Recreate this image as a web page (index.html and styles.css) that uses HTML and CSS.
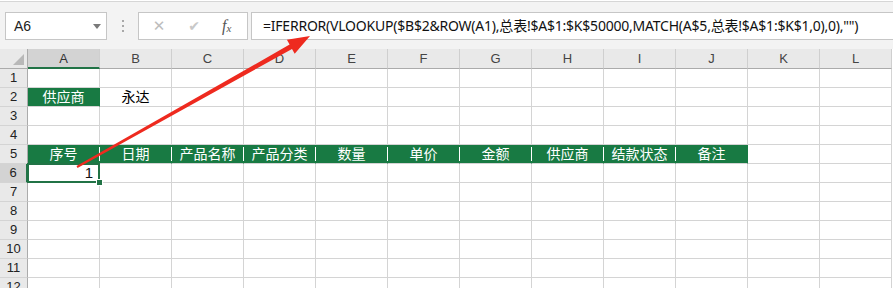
FILE: index.html
```html
<html>
	<head>
		<title>总表 - 公式</title>
	<link rel="stylesheet" href="styles.css">
	</head>
	<body>
		<div class="app">
			<div class="topbar">
				<div class="namebox">
					<span>A6</span>
					<span class="drop"></span>
				</div>
				<div class="grip"><i></i><i></i><i></i></div>
				<div class="fxbox">
					<span class="btn cancel">&#x2715;</span>
					<span class="btn ok">&#x2714;</span>
					<span class="fx">f<sub>x</sub></span>
				</div>
				<div class="formula">=IFERROR(VLOOKUP($B$2&amp;ROW(A1),总表!$A$1:$K$50000,MATCH(A$5,总表!$A$1:$K$1,0),0),"")</div>
			</div>
			<div class="sheet" id="sheet"></div>
		</div>
		<svg class="arrow" width="893" height="288" viewBox="0 0 893 288">
			<polygon fill="#ee2a1f" points="76.5,166.1 289.6,44.6 286.9,39.8 310,36 294.7,53.8 292,49 77.5,167.9"/>
		</svg>
		<script>
			var cols = ["A","B","C","D","E","F","G","H","I","J","K","L"];
			var kopf = ["序号","日期","产品名称","产品分类","数量","单价","金额","供应商","结款状态","备注"];
			var sheet = document.getElementById("sheet");
			var html = '<div class="corner"></div>';

			for (var c = 0; c < cols.length; c++){
				html += '<div class="colhead' + (c == 0 ? ' sel' : '') + '">' + cols[c] + '</div>';
			}

			for (var r = 1; r <= 12; r++){
				html += '<div class="rowhead' + (r == 6 ? ' sel' : '') + '">' + r + '</div>';
				for (var c = 0; c < cols.length; c++){
					var cls = "cell", txt = "";
					if (r == 2 && c == 0){ cls += " green"; txt = "供应商"; }
					if (r == 2 && c == 1){ txt = "永达"; }
					if (r == 5 && c < kopf.length){
						cls += " green head" + (c < kopf.length - 1 ? " split" : "");
						txt = kopf[c];
					}
					if (r == 6 && c == 0){ cls += " active"; txt = "1"; }
					html += '<div class="' + cls + '">' + txt + '</div>';
				}
			}
			sheet.innerHTML = html;
		</script>
	</body>
</html>
```

FILE: styles.css
```css
body {
	margin: 0;
	width: 893px;
	height: 288px;
	overflow: hidden;
	background-color: #ffffff;
	font-family: "Noto Sans", "Noto Sans CJK SC", sans-serif;
}

.app {
	padding-top: 1px;
}

.topbar {
	display: flex;
	align-items: flex-start;
	height: 48px;
	padding-top: 10px;
	box-sizing: border-box;
	background-color: #f3f3f3;
	border-top: 1px solid #d6d6d6;
}

.namebox {
	display: flex;
	align-items: center;
	justify-content: space-between;
	margin-left: 5px;
	width: 102px;
	height: 28px;
	box-sizing: border-box;
	padding: 0 5px 0 8px;
	background-color: white;
	border: 1px solid #c6c6c6;
	font-family: "Liberation Sans", sans-serif;
	font-size: 14px;
	color: #222;
}

.drop {
	width: 0;
	height: 0;
	border-left: 4px solid transparent;
	border-right: 4px solid transparent;
	border-top: 5px solid #7a7a7a;
}

.grip {
	width: 31px;
	height: 28px;
	display: flex;
	flex-direction: column;
	align-items: center;
	justify-content: center;
	gap: 3px;
}

.grip i {
	display: block;
	width: 2px;
	height: 2px;
	background-color: #a8a8a8;
}

.fxbox {
	display: flex;
	align-items: center;
	width: 110px;
	height: 28px;
	box-sizing: border-box;
	background-color: white;
	border: 1px solid #c6c6c6;
}

.btn {
	width: 24px;
	margin-left: 8px;
	text-align: center;
	font-size: 15px;
	color: #bdbdbd;
	font-family: "DejaVu Sans", sans-serif;
}

.btn.ok {
	margin-left: 11px;
	font-size: 14px;
	color: #c8c8c8;
}

.fx {
	margin-left: 16px;
	font-family: "Liberation Serif", serif;
	font-style: italic;
	font-size: 16px;
	color: #555;
}

.fx sub {
	font-size: 11px;
	vertical-align: -1px;
}

.formula {
	flex: 1;
	margin-left: 3px;
	margin-right: -4px;
	height: 28px;
	box-sizing: border-box;
	padding: 0 0 0 11px;
	background-color: white;
	border: 1px solid #c6c6c6;
	font-size: 14px;
	letter-spacing: -0.22px;
	line-height: 26px;
	color: #111;
	white-space: nowrap;
	overflow: hidden;
}

.sheet {
	display: grid;
	grid-template-columns: 28px repeat(12, 72px);
	grid-template-rows: 20px;
	grid-auto-rows: 19px;
}

.sheet > div {
	box-sizing: border-box;
	border-right: 1px solid #d4d4d4;
	border-bottom: 1px solid #d4d4d4;
	font-size: 14px;
	line-height: 18px;
	text-align: center;
	white-space: nowrap;
	position: relative;
}

.corner {
	background-color: #e9e9e9;
	border-color: #ababab !important;
}

.corner:after {
	content: "";
	position: absolute;
	right: 3px;
	bottom: 3px;
	width: 0;
	height: 0;
	border-left: 11px solid transparent;
	border-bottom: 11px solid #b8b8b8;
}

.colhead {
	background-color: #e9e9e9;
	border-bottom-color: #ababab !important;
	border-right-color: #cfcfcf !important;
	font-family: "Liberation Sans", sans-serif;
	font-size: 13px !important;
	color: #444;
	line-height: 19px !important;
}

.colhead.sel {
	background-color: #d3d3d3;
	border-bottom: 2px solid #217346 !important;
	color: #333;
}

.rowhead {
	background-color: #e9e9e9;
	border-right-color: #ababab !important;
	font-family: "Liberation Sans", sans-serif;
	font-size: 13px !important;
	color: #222;
}

.rowhead.sel {
	background-color: #d3d3d3;
	border-right: 2px solid #217346 !important;
}

.cell.green {
	background-color: #187a43;
	border-right-color: #187a43;
	color: white;
}

.cell.split:after {
	content: "";
	position: absolute;
	right: -1px;
	top: 2px;
	bottom: 2px;
	width: 1px;
	background-color: #ffffff;
}

.cell.active {
	text-align: right;
	padding-right: 6px;
	font-family: "Liberation Sans", sans-serif;
	font-size: 15px;
	color: #111;
}

.cell.active:before {
	content: "";
	position: absolute;
	left: -1px;
	top: -1px;
	right: -1px;
	bottom: -1px;
	border: 2px solid #217346;
}

.cell.active:after {
	content: "";
	position: absolute;
	right: -4px;
	bottom: -4px;
	width: 5px;
	height: 5px;
	background-color: #217346;
	border: 1px solid white;
	z-index: 2;
}

.arrow {
	position: absolute;
	left: 0;
	top: 0;
	pointer-events: none;
}
```
